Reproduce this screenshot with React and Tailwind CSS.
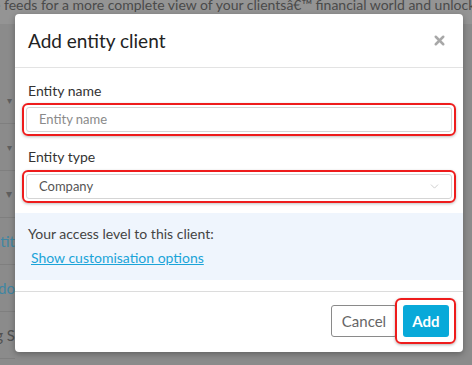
import { FiX, FiChevronDown } from "react-icons/fi";

const bgRows = [
  { text: "▾", cls: "text-[10px] text-[#5f5f5f] pr-[3px]" },
  { text: "▾", cls: "text-[10px] text-[#5f5f5f] pr-[3px]" },
  { text: "▾", cls: "text-[12px] text-[#5f5f5f] pr-[3px]" },
  { text: "Entit", cls: "text-[15px] text-[#3f86a3]" },
  { text: "Ado", cls: "text-[15px] text-[#3f86a3]" },
  { text: "ng S", cls: "text-[15px] text-[#505050]" },
];

export default function App() {
  return (
    <div
      className="relative w-[472px] h-[365px] overflow-hidden bg-[#8b8b8b]"
      style={{ fontFamily: "Lato, 'Noto Sans', sans-serif" }}
    >
      {/* page behind the overlay */}
      <div className="h-[24px] bg-[#949494] overflow-hidden whitespace-nowrap">
        <p className="text-[14px] leading-[14px] text-[#4a4a4a] -mt-[2px] -ml-[7px]">
          e feeds for a more complete view of your clientsâ€™ financial world and unlock
        </p>
      </div>
      <div className="pt-[53px] w-[15px] overflow-hidden">
        {bgRows.map((r, i) => (
          <div
            key={i}
            className="h-[47px] border-b border-[#7f7f7f] flex items-center justify-end whitespace-nowrap"
          >
            <span className={r.cls}>{r.text}</span>
          </div>
        ))}
      </div>

      {/* modal */}
      <div className="absolute left-[15px] top-[14px] w-[448px] h-[338px] bg-white rounded-[4px] shadow-[0_2px_6px_rgba(0,0,0,0.3)] flex flex-col">
        <div className="h-[54px] shrink-0 border-b border-[#e3e3e3] flex items-center justify-between pl-[13px] pr-[16px]">
          <h2 className="text-[19px] text-[#222] pt-[2px]">Add entity client</h2>
          <FiX className="text-[#a8a8a8] text-[15px]" strokeWidth={4} />
        </div>

        <div className="px-[7px] pt-[14px]">
          <label className="block text-[14px] text-[#333] pl-[6px] leading-[18px]">Entity name</label>
          <div className="mt-[3px] rounded-[6px] border-2 border-[#ee1c1c] p-[2px] shadow-[0_1px_3px_rgba(0,0,0,0.25)]">
            <div className="h-[25px] border border-[#d5d5d5] rounded-[3px] flex items-center pl-[12px] text-[13px] text-[#8a8a8a]">
              Entity name
            </div>
          </div>

          <label className="block text-[14px] text-[#333] pl-[6px] leading-[18px] mt-[12px]">Entity type</label>
          <div className="mt-[4px] rounded-[6px] border-2 border-[#ee1c1c] p-[2px] shadow-[0_1px_3px_rgba(0,0,0,0.25)]">
            <div className="h-[25px] border border-[#d5d5d5] rounded-[3px] flex items-center justify-between pl-[12px] pr-[10px] text-[13px] text-[#555]">
              <span>Company</span>
              <FiChevronDown className="text-[#c4c4c4] text-[13px]" strokeWidth={1.5} />
            </div>
          </div>
        </div>

        <div className="mt-[10px] bg-[#eff5fd] h-[67px] shrink-0 pl-[13px] pt-[12px]">
          <p className="text-[14px] text-[#444] leading-[18px]">Your access level to this client:</p>
          <a className="block mt-[6px] ml-[3px] text-[14px] text-[#1ba4d8] underline leading-[18px]">
            Show customisation options
          </a>
        </div>

        <div className="mt-[11px] border-t border-[#dcdcdc] flex-1 flex items-start justify-end pt-[13px] pr-[14px] gap-[6px]">
          <button className="h-[32px] w-[66px] border border-[#8a8a8a] rounded-[3px] text-[15px] text-[#666] bg-white">
            Cancel
          </button>
          <div className="relative">
            <div className="absolute -left-[8px] -right-[7px] -top-[7px] -bottom-[7px] rounded-[6px] border-2 border-[#ee1c1c] shadow-[0_1px_3px_rgba(0,0,0,0.3)]" />
            <button className="relative h-[32px] w-[46px] rounded-[3px] bg-[#08a9d9] text-[15px] font-bold text-white">
              Add
            </button>
          </div>
        </div>
      </div>
    </div>
  );
}
